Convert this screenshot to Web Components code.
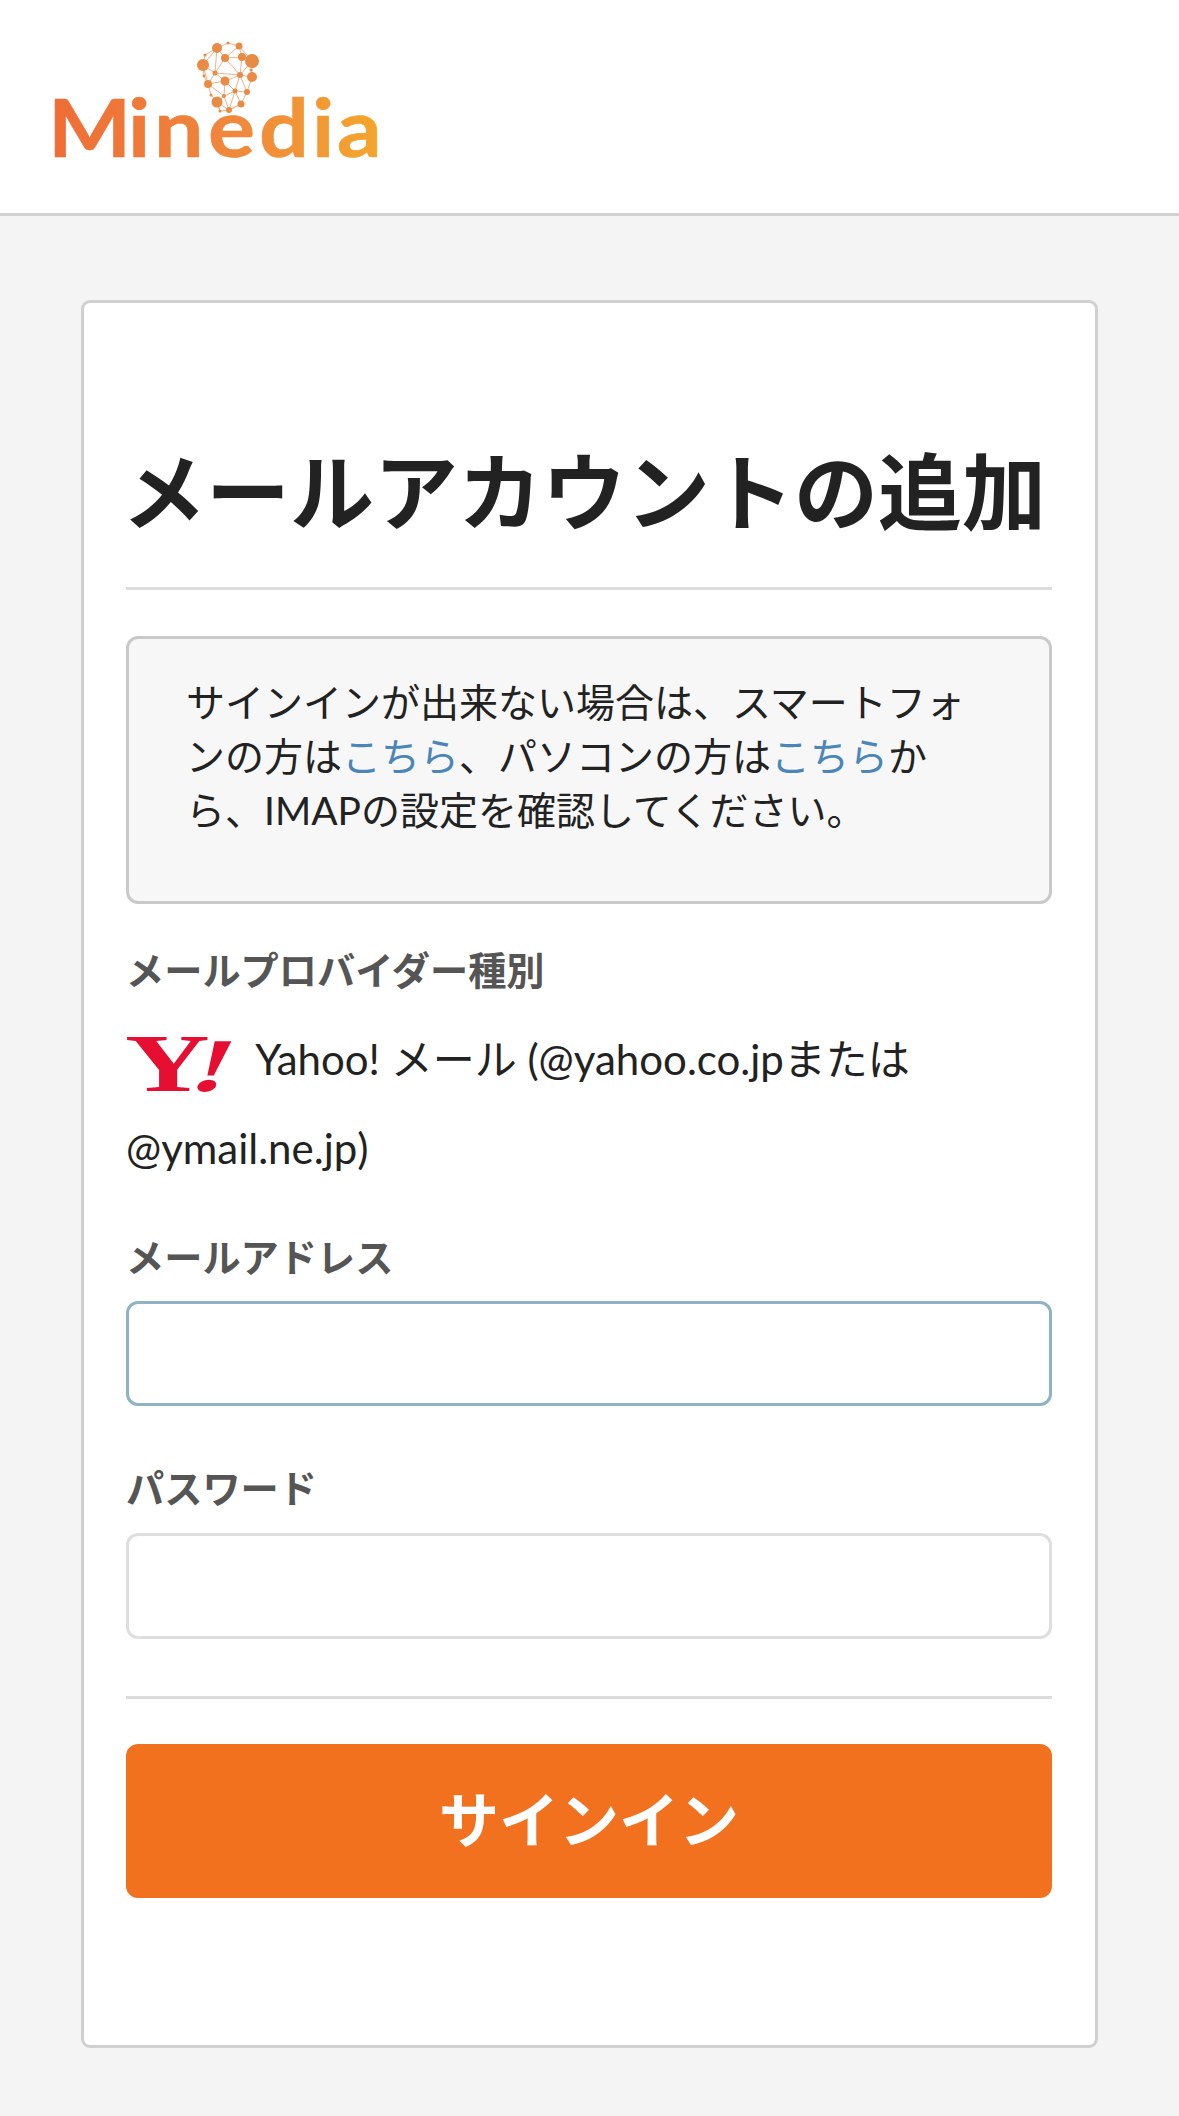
<!DOCTYPE html>
<html lang="ja">
<head>
<meta charset="utf-8">
<title>メールアカウントの追加</title>
<style>
  html, body { margin: 0; padding: 0; background: #f4f4f4; }
  body { font-family: Lato, "Noto Sans CJK JP", sans-serif; color: #222; }
</style>
</head>
<body>
<app-header></app-header>
<login-card>
  <span slot="title">メールアカウントの追加</span>
  <info-note>サインインが出来ない場合は、スマートフォンの方は<a>こちら</a>、パソコンの方は<a>こちら</a>から、IMAPの設定を確認してください。</info-note>
  <field-label>メールプロバイダー種別</field-label>
  <provider-row>Yahoo! メール (@yahoo.co.jpまたは @ymail.ne.jp)</provider-row>
  <field-label class="gap">メールアドレス</field-label>
  <text-field focused></text-field>
  <field-label class="gap">パスワード</field-label>
  <text-field type="password"></text-field>
  <sign-in-button slot="footer">サインイン</sign-in-button>
</login-card>

<script>
const FONT = 'Lato, "Noto Sans CJK JP", sans-serif'

// node positions of the bulb in the logo, in page pixels
const NODES = [
  [217, 48, 5], [239, 46, 3.5], [252, 61, 7], [203, 65, 6], [225, 58, 4], [242, 57, 4],
  [215, 73, 2.5], [240, 75, 3], [252, 77, 5], [225, 81, 4.5], [208, 84, 4], [247, 92, 3],
  [235, 91, 2.5], [224, 96, 2], [217, 102, 5.5], [241, 104, 3.5], [229, 110, 3], [220, 111, 1.5],
  [228, 43, 1.5], [205, 55, 1.5], [204, 76, 1.5], [211, 95, 1.5], [251, 70, 1.5]
]
const LINKS = [
  [0, 18], [18, 1], [1, 2], [2, 8], [8, 11], [11, 15], [15, 16], [16, 17], [17, 14], [14, 21], [21, 10], [10, 20], [20, 3], [3, 19], [19, 0],
  [0, 4], [4, 1], [4, 5], [5, 2], [1, 5], [0, 3], [3, 6], [6, 4], [6, 7], [5, 7], [7, 2], [7, 8], [6, 9], [9, 7], [9, 10], [10, 6],
  [9, 12], [7, 12], [12, 11], [7, 11], [12, 15], [9, 13], [13, 12], [13, 14], [10, 13], [14, 16], [13, 16], [12, 16], [3, 10], [4, 7], [0, 6], [14, 17], [16, 15]
]

customElements.define('minedia-logo', class extends HTMLElement {
  constructor () {
    super()
    this.attachShadow({ mode: 'open' })
    const lines = LINKS.map(([a, b]) => `<line x1="${NODES[a][0]}" y1="${NODES[a][1]}" x2="${NODES[b][0]}" y2="${NODES[b][1]}"/>`).join('')
    const dots = NODES.map(([x, y, r]) => `<circle cx="${x}" cy="${y}" r="${r}"/>`).join('')
    this.shadowRoot.innerHTML = `
      <style>
        :host { display: block; width: 335px; height: 125px; }
        svg { display: block; overflow: visible; }
        text { font: 700 80px Lato, sans-serif; }
      </style>
      <svg width="335" height="125" viewBox="50 40 335 125" role="img" aria-label="Minedia">
        <defs>
          <linearGradient id="fade" gradientUnits="userSpaceOnUse" x1="49" y1="0" x2="342" y2="0">
            <stop offset="0" stop-color="#ee6d36"/>
            <stop offset="0.6" stop-color="#f08a3c"/>
            <stop offset="1" stop-color="#f4a52c"/>
          </linearGradient>
        </defs>
        <g stroke="#efb48a" stroke-width="1">${lines}</g>
        <g fill="#e98a45">${dots}</g>
        <text transform="scale(1.1 1)" x="43.6 116.3 140 189.1 235.4 283.6 306.4" y="157" fill="url(#fade)" stroke="url(#fade)" stroke-width="0.6">Minedia</text>
      </svg>
    `
  }
})

customElements.define('app-header', class extends HTMLElement {
  constructor () {
    super()
    this.attachShadow({ mode: 'open' })
    this.shadowRoot.innerHTML = `
      <style>
        :host {
          display: block;
          box-sizing: border-box;
          height: 216px;
          padding: 40px 0 0 50px;
          background: #fff;
          border-bottom: 3px solid #d2d2d2;
        }
      </style>
      <minedia-logo></minedia-logo>
    `
  }
})

customElements.define('login-card', class extends HTMLElement {
  constructor () {
    super()
    this.attachShadow({ mode: 'open' })
    this.shadowRoot.innerHTML = `
      <style>
        :host { display: block; padding: 84px 81px 68px; font-family: ${FONT}; }
        .card {
          padding: 126px 43px 147px 42px;
          background: #fff;
          border: 3px solid #d0d0d0;
          border-radius: 9px;
        }
        h1 {
          margin: 0 0 0 -4px;
          font-size: 84px;
          line-height: 126px;
          font-weight: 700;
          color: #222;
          white-space: nowrap;
        }
        hr { margin: 0; height: 3px; border: 0; background: #dcdcdc; }
        .top { margin: 32px 0 46px; }
        .bottom { margin: 57px 0 45px; }
      </style>
      <section class="card">
        <h1><slot name="title"></slot></h1>
        <hr class="top">
        <slot></slot>
        <hr class="bottom">
        <slot name="footer"></slot>
      </section>
    `
  }
})

customElements.define('info-note', class extends HTMLElement {
  constructor () {
    super()
    this.attachShadow({ mode: 'open' })
    this.shadowRoot.innerHTML = `
      <style>
        :host {
          display: block;
          padding: 36px 57px 64px;
          background: #f7f7f7;
          border: 3px solid #c9c9c9;
          border-radius: 12px;
          font-size: 39px;
          line-height: 54px;
          color: #222;
        }
        ::slotted(a) { color: #4a86b8; }
      </style>
      <slot></slot>
    `
  }
})

customElements.define('field-label', class extends HTMLElement {
  constructor () {
    super()
    this.attachShadow({ mode: 'open' })
    this.shadowRoot.innerHTML = `
      <style>
        :host {
          display: block;
          margin-top: 39px;
          font-size: 38.2px;
          line-height: 54px;
          font-weight: 700;
          color: #555;
        }
        :host(.gap) { margin-top: 37px; }
      </style>
      <slot></slot>
    `
  }
})

customElements.define('yahoo-mark', class extends HTMLElement {
  constructor () {
    super()
    this.attachShadow({ mode: 'open' })
    this.shadowRoot.innerHTML = `
      <style>
        :host { display: inline-block; width: 120px; height: 56px; vertical-align: -17px; }
        svg { display: block; overflow: visible; }
        text { font-family: "Liberation Serif", serif; font-weight: 700; fill: #e60f32; }
      </style>
      <svg width="104" height="56" viewBox="0 0 104 56" aria-hidden="true">
        <text transform="translate(-1 55) scale(1.43 1)" font-size="82">Y</text>
        <text transform="translate(60 55) skewX(-20) scale(1.5 1)" font-size="76">!</text>
      </svg>
    `
  }
})

customElements.define('provider-row', class extends HTMLElement {
  constructor () {
    super()
    this.attachShadow({ mode: 'open' })
    this.shadowRoot.innerHTML = `
      <style>
        :host {
          display: block;
          margin-top: 18px;
          font-size: 42px;
          line-height: 89px;
          color: #222;
        }
      </style>
      <yahoo-mark></yahoo-mark>
      <slot></slot>
    `
  }
})

customElements.define('text-field', class extends HTMLElement {
  constructor () {
    super()
    this.attachShadow({ mode: 'open' })
    const type = this.getAttribute('type') || 'text'
    const isPassword = type === 'password'
    this.shadowRoot.innerHTML = `
      <style>
        :host { display: block; margin: ${isPassword ? 18 : 17}px 0 ${isPassword ? 0 : 55}px; }
        input {
          display: block;
          box-sizing: border-box;
          width: 100%;
          height: ${isPassword ? 106 : 105}px;
          padding: 0 24px;
          background: #fff;
          border: 3px solid #dedede;
          border-radius: 12px;
          font: 42px Lato, sans-serif;
          outline: none;
        }
        :host([focused]) input { border-color: #8fb2c6; }
      </style>
      <input type="${type}">
    `
  }
})

customElements.define('sign-in-button', class extends HTMLElement {
  constructor () {
    super()
    this.attachShadow({ mode: 'open' })
    this.shadowRoot.innerHTML = `
      <style>
        :host { display: block; }
        button {
          display: block;
          width: 100%;
          height: 154px;
          padding: 0 0 10px;
          background: #f2711f;
          border: 0;
          border-radius: 12px;
          color: #fff;
          font-family: ${FONT};
          font-size: 60px;
          font-weight: 700;
          cursor: pointer;
        }
      </style>
      <button><slot></slot></button>
    `
  }
})
</script>
</body>
</html>
